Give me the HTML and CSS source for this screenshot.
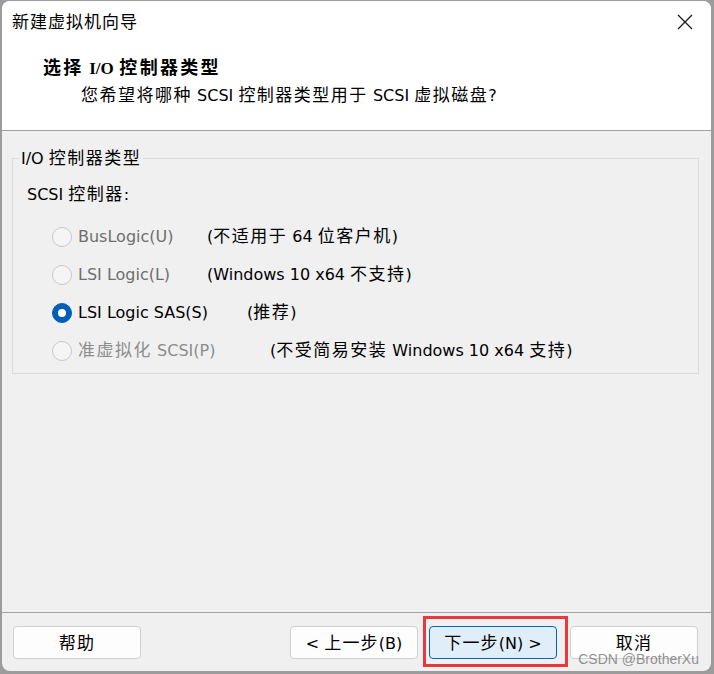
FILE: index.html
```html
<!DOCTYPE html>
<html lang="zh">
<head>
<meta charset="utf-8">
<title>新建虚拟机向导</title>
<link rel="stylesheet" href="styles.css">
</head>
<body>
<div class="window">
  <div class="top">
    <div class="titlebar">
      <span class="title"><span class="zh">新建虚拟机向导</span></span>
      <span class="close">
        <svg width="16" height="16" viewBox="0 0 16 16"><path d="M1 1 L15 15 M15 1 L1 15" stroke="#1a1a1a" stroke-width="1.3" fill="none"/></svg>
      </span>
    </div>
    <div class="header">
      <div class="h-title"><span class="zh">选择</span> <span class="serif">I/O</span> <span class="zh">控制器类型</span></div>
      <div class="h-sub"><span class="zh">您希望将哪种</span> SCSI <span class="zh">控制器类型用于</span> SCSI <span class="zh">虚拟磁盘</span>?</div>
    </div>
  </div>
  <div class="content">
    <fieldset class="group">
      <legend>I/O <span class="zh">控制器类型</span></legend>
      <div class="group-label">SCSI <span class="zh">控制器</span>:</div>
      <div class="row row-u disabled">
        <span class="radio"></span>
        <span class="label">BusLogic(U)</span>
        <span class="note">(<span class="zh">不适用于</span> 64 <span class="zh">位客户机</span>)</span>
      </div>
      <div class="row row-l disabled">
        <span class="radio"></span>
        <span class="label">LSI Logic(L)</span>
        <span class="note">(Windows 10 x64 <span class="zh">不支持</span>)</span>
      </div>
      <div class="row row-s">
        <span class="radio checked"></span>
        <span class="label">LSI Logic SAS(S)</span>
        <span class="note">(<span class="zh">推荐</span>)</span>
      </div>
      <div class="row row-p disabled light">
        <span class="radio"></span>
        <span class="label"><span class="zh">准虚拟化</span> SCSI(P)</span>
        <span class="note">(<span class="zh">不受简易安装</span> Windows 10 x64 <span class="zh">支持</span>)</span>
      </div>
    </fieldset>
  </div>
  <div class="footer">
    <button class="btn"><span class="zh">帮助</span></button>
    <div class="spacer"></div>
    <button class="btn">&lt; <span class="zh">上一步</span>(B)</button>
    <div class="highlight">
      <button class="btn primary"><span class="zh">下一步</span>(N) &gt;</button>
    </div>
    <button class="btn"><span class="zh">取消</span></button>
  </div>
  <div class="watermark">CSDN @BrotherXu</div>
</div>
</body>
</html>
```

FILE: styles.css
```css
html, body {
  margin: 0;
  padding: 0;
}
body {
  background: #9c9c9c;
  width: 714px;
  height: 674px;
  padding: 1px 3px 3px 2px;
  box-sizing: border-box;
  font-family: "DejaVu Sans", "Noto Sans CJK SC", sans-serif;
  color: #000;
}
.zh {
  font-family: "Noto Sans CJK SC", sans-serif;
  font-size: 17px;
  letter-spacing: 1.5px;
  line-height: 1;
}
.window {
  position: relative;
  width: 100%;
  height: 100%;
  background: #f0f0f0;
  border-radius: 8px;
  overflow: hidden;
  display: flex;
  flex-direction: column;
}
.top {
  background: #fff;
  border-bottom: 1px solid #a0a0a0;
}
.titlebar {
  height: 44px;
  display: flex;
  align-items: center;
  justify-content: space-between;
  padding: 0 18px 0 10px;
}
.title {
  font-size: 16px;
  line-height: 22px;
  margin-top: -1px;
}
.title .zh {
  font-size: 17px;
  letter-spacing: 1px;
}
.close {
  display: flex;
  margin-top: -2px;
}
.header {
  padding: 12px 0 23px 41px;
}
.h-title {
  font-size: 16px;
  line-height: 22px;
  height: 22px;
  font-weight: bold;
}
.h-title .zh {
  font-size: 18px;
  letter-spacing: 2.3px;
}
.serif {
  font-family: "Liberation Serif", serif;
  font-size: 17px;
  line-height: 1;
}
.h-sub {
  margin-top: 6px;
  padding-left: 38px;
  font-size: 16px;
  line-height: 22px;
  height: 22px;
}
.content {
  flex: 1;
  padding: 17px 12px 0 10px;
}
.group {
  margin: 0;
  padding: 16px 0 3px 0;
  border: 1px solid #dcdcdc;
}
.group legend {
  margin-left: 6px;
  padding: 0 2px;
  font-size: 16px;
  line-height: 20px;
  height: 20px;
}
.group-label {
  padding-left: 14px;
  font-size: 16px;
  line-height: 22px;
  height: 22px;
  margin-bottom: 12px;
}
.row {
  display: flex;
  align-items: center;
  height: 38px;
  padding-left: 39px;
  font-size: 16px;
  line-height: 22px;
}
.radio {
  width: 18px;
  height: 18px;
  border-radius: 50%;
  border: 1px solid #c9c9c9;
  background: #f5f5f5;
  flex: none;
  display: flex;
  align-items: center;
  justify-content: center;
}
.radio.checked {
  background: #005fb8;
  border-color: #005fb8;
}
.radio.checked::after {
  content: "";
  width: 8px;
  height: 8px;
  border-radius: 50%;
  background: #fff;
}
.label {
  margin-left: 6px;
  white-space: nowrap;
}
.disabled .label {
  color: #6e6e6e;
}
.light .label {
  color: #8c8c8c;
}
.row-u .label, .row-l .label { width: 129px; }
.row-s .label { width: 169px; }
.row-p .label { width: 192px; }
.note {
  color: #000;
  white-space: nowrap;
}
.footer {
  border-top: 1px solid #a0a0a0;
  padding: 13px 13px 12px 11px;
  display: flex;
  align-items: center;
}
.spacer { flex: 1; }
.btn {
  width: 128px;
  height: 33px;
  background: #fdfdfd;
  border: 1px solid #d0d0d0;
  border-radius: 4px;
  font-family: "DejaVu Sans", "Noto Sans CJK SC", sans-serif;
  font-size: 16px;
  color: #000;
  padding: 0;
  white-space: nowrap;
}
.btn .zh {
  font-size: 17px;
  letter-spacing: 1.2px;
}
.highlight {
  position: relative;
  margin: 0 13px 0 11px;
  display: flex;
}
.highlight::after {
  content: "";
  position: absolute;
  left: -6px;
  top: -10px;
  right: -11px;
  bottom: -8px;
  border: 3px solid #e8393d;
  pointer-events: none;
}
.btn.primary {
  background: #e0eef9;
  border-color: #0067c0;
}
.watermark {
  position: absolute;
  right: 12px;
  bottom: 4px;
  font-family: "Liberation Sans", sans-serif;
  font-size: 14px;
  color: rgba(110, 110, 110, 0.75);
  pointer-events: none;
}
```
